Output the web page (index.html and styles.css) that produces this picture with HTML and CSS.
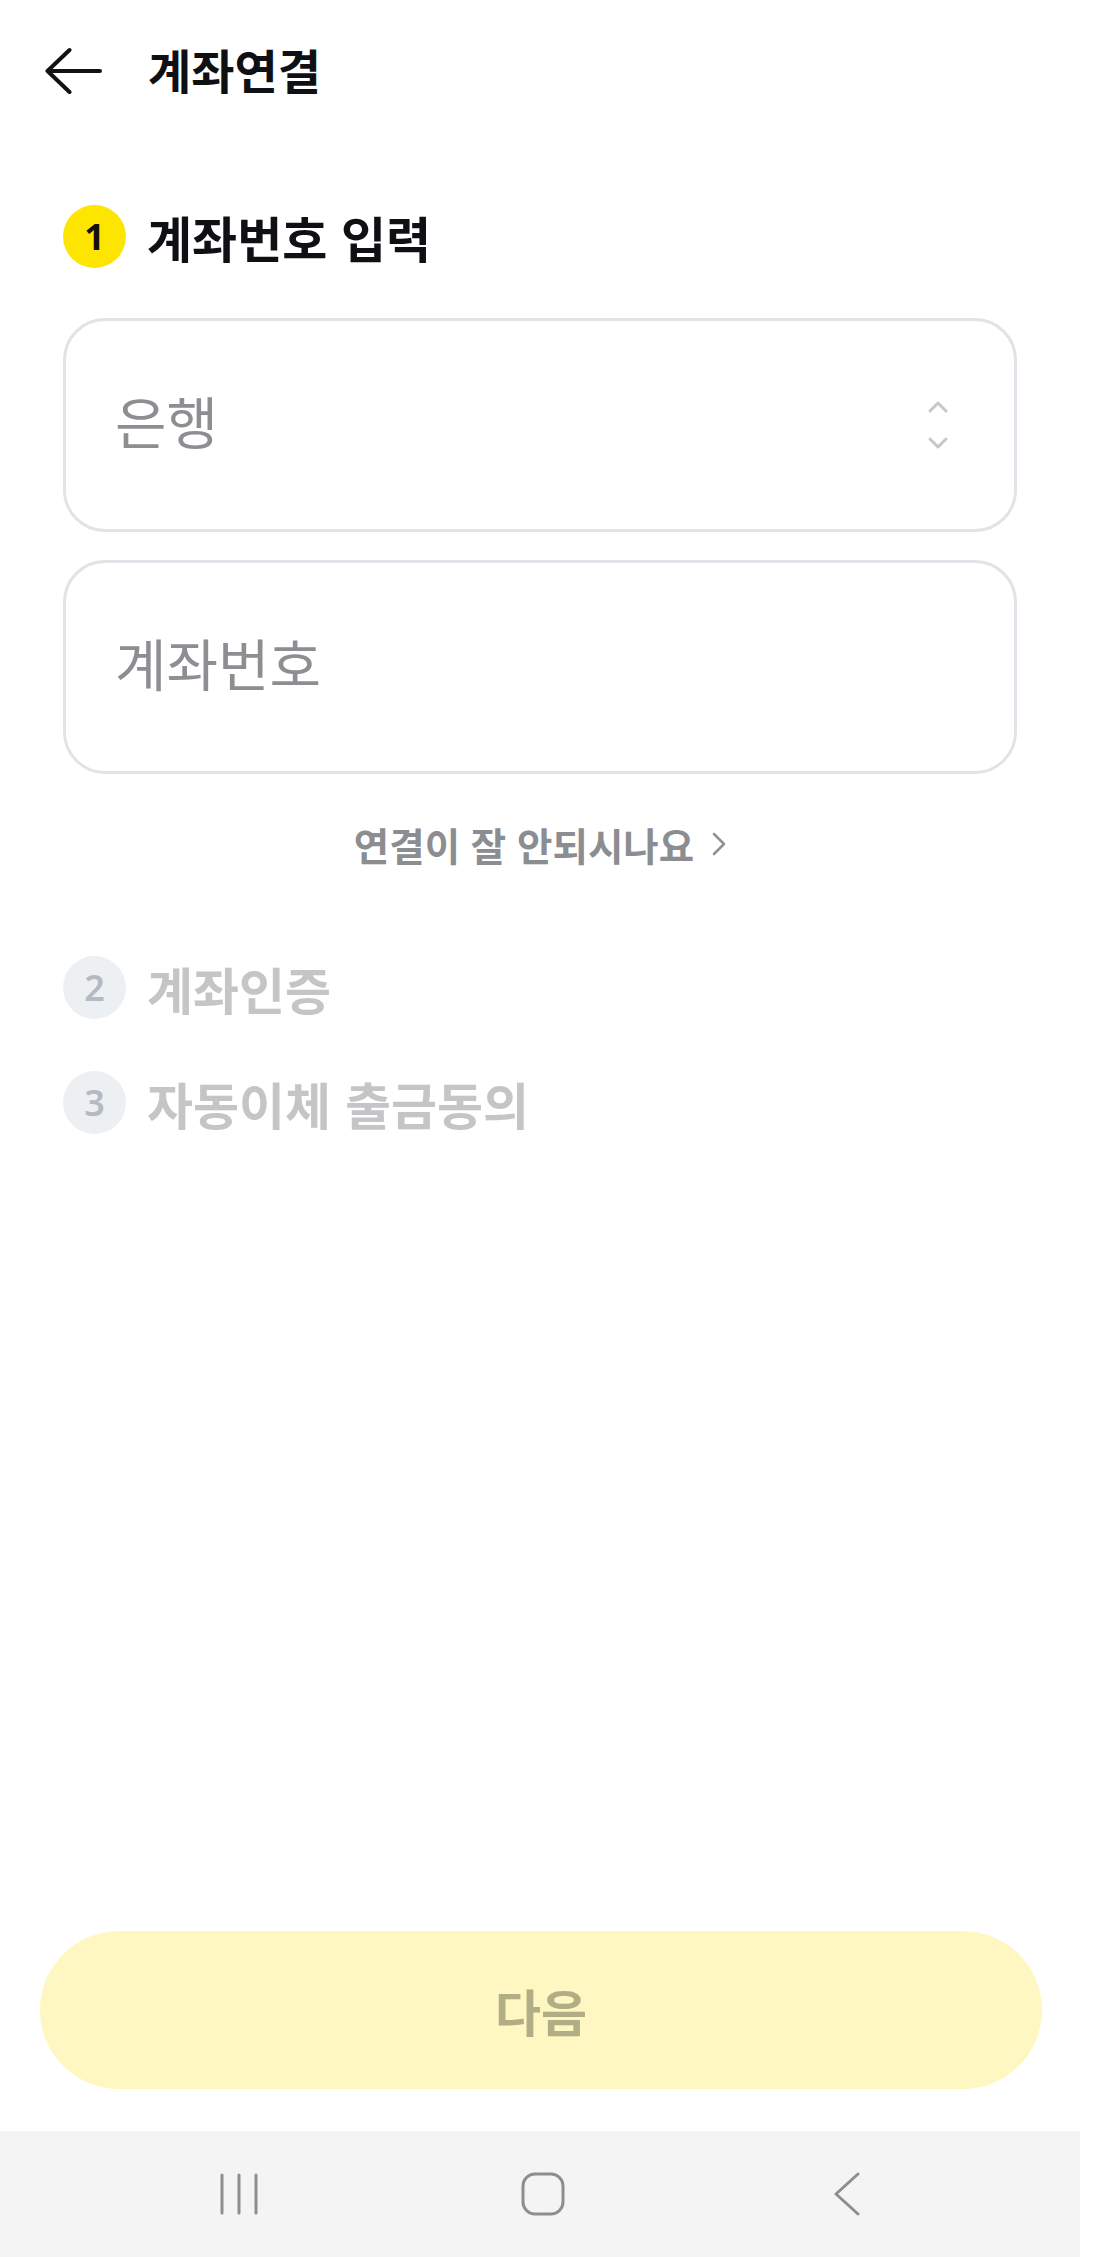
FILE: index.html
```html
<!DOCTYPE html>
<html lang="ko">
<head>
    <meta charset="UTF-8">
    <meta name="viewport" content="width=device-width, initial-scale=1.0">
    <title>계좌연결</title>
    <link rel="stylesheet" href="styles.css">
</head>
<body>
    <div class="screen">
        <header class="topbar">
            <svg class="back-icon" width="58" height="48" viewBox="0 0 58 48">
                <path d="M2.5 24 L24.5 3 M2.5 24 L24.5 45 M2.5 24 H55" />
            </svg>
            <h1 class="page-title">계좌연결</h1>
        </header>

        <main class="content">
            <div class="step step-active">
                <span class="step-num">1</span>
                <h2 class="step-title">계좌번호 입력</h2>
            </div>

            <div class="field field-select">
                <span class="placeholder">은행</span>
                <svg class="select-icon" width="22" height="50" viewBox="0 0 22 50">
                    <path d="M3 11 L11 3 L19 11 M3 39 L11 47 L19 39" />
                </svg>
            </div>
            <div class="field">
                <span class="placeholder">계좌번호</span>
            </div>

            <a class="help-link" href="#">
                연결이 잘 안되시나요
                <svg width="14" height="24" viewBox="0 0 14 24">
                    <path d="M2 2 L12 12 L2 22" />
                </svg>
            </a>

            <div class="step step-off step-second">
                <span class="step-num">2</span>
                <h2 class="step-title">계좌인증</h2>
            </div>
            <div class="step step-off">
                <span class="step-num">3</span>
                <h2 class="step-title">자동이체 출금동의</h2>
            </div>
        </main>

        <div class="footer">
            <button class="next-btn" disabled>다음</button>
        </div>

        <nav class="navbar">
            <span class="nav-item">
                <svg width="40" height="44" viewBox="0 0 40 44">
                    <path d="M3 3 V41 M20 3 V41 M37 3 V41" />
                </svg>
            </span>
            <span class="nav-item">
                <svg width="44" height="44" viewBox="0 0 44 44">
                    <rect x="2" y="2" width="40" height="40" rx="12" />
                </svg>
            </span>
            <span class="nav-item">
                <svg width="30" height="44" viewBox="0 0 30 44">
                    <path d="M26 2 L4 22 L26 42" />
                </svg>
            </span>
        </nav>
    </div>
</body>
</html>
```

FILE: styles.css
```css
body {
    margin: 0;
    background: #fff;
    font-family: "Noto Sans CJK KR", "Noto Sans", sans-serif;
}

.screen {
    width: 1080px;
    min-height: 100vh;
    display: flex;
    flex-direction: column;
    background: #fff;
}

/* 상단 바 */
.topbar {
    height: 142px;
    display: flex;
    align-items: center;
    padding-left: 45px;
    gap: 45px;
}

.back-icon path {
    fill: none;
    stroke: #111214;
    stroke-width: 4;
    stroke-linecap: round;
    stroke-linejoin: round;
}

.page-title {
    margin: 0 0 5px;
    font-size: 47px;
    font-weight: 700;
    color: #0e1013;
    line-height: 1;
}

.content {
    flex: 1;
    padding: 63px 63px 0;
}

/* 단계 */
.step {
    display: flex;
    align-items: center;
    gap: 21px;
    height: 63px;
}

.step-num {
    width: 63px;
    height: 63px;
    border-radius: 50%;
    display: flex;
    align-items: center;
    justify-content: center;
    font-family: "Noto Sans", sans-serif;
    font-size: 36px;
    font-weight: 700;
    flex-shrink: 0;
}

.step-title {
    margin: 0;
    font-size: 49px;
    font-weight: 700;
    line-height: 1;
}

.step-active .step-num {
    background: #fee500;
    color: #111;
}

.step-active .step-title {
    color: #0e1013;
}

.step-off {
    margin-top: 52px;
}

.step-off .step-num {
    background: #edf0f3;
    color: #b3bac3;
    font-weight: 600;
}

.step-off .step-title {
    color: #c4c5c7;
    font-size: 50px;
}

.step-second {
    margin-top: 87px;
}

/* 입력 박스 */
.field {
    box-sizing: border-box;
    height: 214px;
    border: 3px solid #e0e3e7;
    border-radius: 42px;
    display: flex;
    align-items: center;
    justify-content: space-between;
    padding: 0 65px 0 49px;
    margin-top: 28px;
}

.field-select {
    margin-top: 50px;
}

.placeholder {
    font-size: 56px;
    color: #8d8e92;
    margin-bottom: 12px;
}

.select-icon path {
    fill: none;
    stroke: #c6c7c9;
    stroke-width: 3;
    stroke-linecap: round;
    stroke-linejoin: round;
}

.help-link {
    display: flex;
    align-items: center;
    justify-content: center;
    gap: 18px;
    margin-top: 45px;
    font-size: 38.5px;
    font-weight: 700;
    line-height: 50px;
    color: #8b8d91;
    text-decoration: none;
}

.help-link path {
    fill: none;
    stroke: #8f9195;
    stroke-width: 2.5;
    stroke-linecap: round;
    stroke-linejoin: round;
}

/* 하단 버튼 */
.footer {
    padding: 0 38px 42px 40px;
}

.next-btn {
    width: 100%;
    height: 158px;
    border: none;
    border-radius: 79px;
    background: #fff7c1;
    color: #b1ad84;
    font-family: "Noto Sans CJK KR", sans-serif;
    font-size: 50px;
    font-weight: 700;
}

/* 시스템 내비게이션 */
.navbar {
    height: 126px;
    background: #f4f4f4;
    display: flex;
    align-items: center;
    justify-content: center;
    gap: 240px;
    padding-left: 6px;
}

.nav-item {
    width: 64px;
    display: flex;
    justify-content: center;
}

.navbar path,
.navbar rect {
    fill: none;
    stroke: #8e8e8e;
    stroke-width: 3;
    stroke-linecap: round;
    stroke-linejoin: round;
}
```
